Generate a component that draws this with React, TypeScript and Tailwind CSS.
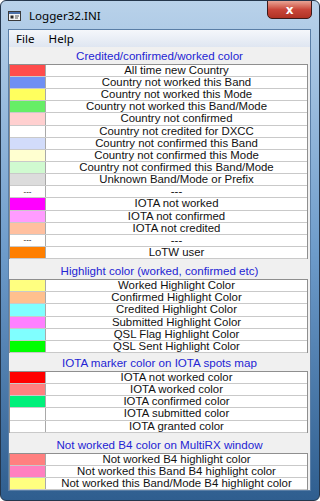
import React from "react";

type Row = { sw: string; label: string; dash?: boolean };

const sec1: Row[] = [
  { sw: "bg-[#ff4c4c]", label: "All time new Country" },
  { sw: "bg-[#6f8ff3]", label: "Country not worked this Band" },
  { sw: "bg-[#ffff5e]", label: "Country not worked this Mode" },
  { sw: "bg-[#66ee66]", label: "Country not worked this Band/Mode" },
  { sw: "bg-[#ffd0d0]", label: "Country not confirmed" },
  { sw: "bg-white", label: "Country not credited for DXCC" },
  { sw: "bg-[#d2dcfa]", label: "Country not confirmed this Band" },
  { sw: "bg-[#ffffd0]", label: "Country not confirmed this Mode" },
  { sw: "bg-[#d0fad0]", label: "Country not confirmed this Band/Mode" },
  { sw: "bg-[#dcdcdc]", label: "Unknown Band/Mode or Prefix" },
  { sw: "bg-white", label: "---", dash: true },
  { sw: "bg-[#ff00ff]", label: "IOTA not worked" },
  { sw: "bg-[#ff9cff]", label: "IOTA not confirmed" },
  { sw: "bg-[#ffc0a0]", label: "IOTA not credited" },
  { sw: "bg-white", label: "---", dash: true },
  { sw: "bg-[#ff7f00]", label: "LoTW user" },
];

const sec2: Row[] = [
  { sw: "bg-[#ffff80]", label: "Worked Highlight Color" },
  { sw: "bg-[#ffc08e]", label: "Confirmed Highlight Color" },
  { sw: "bg-[#80ffff]", label: "Credited Highlight Color" },
  { sw: "bg-[#ff80ff]", label: "Submitted Highlight Color" },
  { sw: "bg-[#80ffff]", label: "QSL Flag Highlight Color" },
  { sw: "bg-[#00ff00]", label: "QSL Sent Highlight Color" },
];

const sec3: Row[] = [
  { sw: "bg-[#ff0000]", label: "IOTA not worked color" },
  { sw: "bg-[#ff8080]", label: "IOTA worked color" },
  { sw: "bg-[#00f07a]", label: "IOTA confirmed color" },
  { sw: "bg-white", label: "IOTA submitted color" },
  { sw: "bg-white", label: "IOTA granted color" },
];

const sec4: Row[] = [
  { sw: "bg-[#ff8080]", label: "Not worked B4 highlight color" },
  { sw: "bg-[#ff80c0]", label: "Not worked this Band B4 highlight color" },
  { sw: "bg-[#ffff80]", label: "Not worked this Band/Mode B4 highlight color" },
];

function Table({ rows }: { rows: Row[] }) {
  return (
    <div className="mr-[2px] border border-[#8f8f8f] border-b-0">
      {rows.map((r, i) => (
        <div key={i} className="flex h-[12.15px] border-b border-[#c9c9c9] bg-white">
          <div className={`w-[36px] border-r border-[#a9a9a9] ${r.sw} flex items-center justify-center text-[8px] leading-[8px] text-black`}>
            {r.dash ? "---" : ""}
          </div>
          <div className="flex-1 text-center text-[11.4px] leading-[11.5px] text-[#111]">{r.label}</div>
        </div>
      ))}
    </div>
  );
}

function Header({ text, h }: { text: string; h: string }) {
  return (
    <div className={`flex items-end justify-center ${h} pb-[2px] text-[11.6px] leading-[13px] text-[#2424d4]`}>
      {text}
    </div>
  );
}

export default function App() {
  return (
    <div className="w-[320px] h-[501px] bg-white" style={{ fontFamily: '"Liberation Sans", Arial, sans-serif' }}>
      <div className="relative w-[320px] h-[501px] rounded-[6px] border border-[#24364c] bg-gradient-to-b from-[#b9d2ea] via-[#6e9ccb] to-[#2f5e8f] flex flex-col overflow-hidden">
        {/* title bar */}
        <div className="h-[28px] flex items-start pl-[7px] pt-[8px] relative">
          <svg width="14" height="12" viewBox="0 0 14 12" className="mt-[1px]">
            <rect x="0.5" y="1.5" width="12" height="9" fill="#f4f4f4" stroke="#3a3a3a" />
            <rect x="1" y="2" width="11" height="2" fill="#4a6fa8" />
            <rect x="2.5" y="5.5" width="3" height="3" fill="#2a2a2a" />
            <path d="M7 6h4M7 8h3" stroke="#555" />
          </svg>
          <span className="ml-[7px] text-[11.6px] leading-[14px] text-black" style={{ fontFamily: '"Noto Sans", "Open Sans", sans-serif' }}>
            Logger32.INI
          </span>
          <div className="absolute left-[266px] top-[-1px] w-[45px] h-[19px] rounded-b-[5px] border border-[#3b1a1a] bg-gradient-to-b from-[#e8a395] via-[#c9463a] to-[#b03224] flex items-center justify-center">
            <span className="text-white font-bold text-[12px] leading-[12px]" style={{ fontFamily: '"DejaVu Sans", sans-serif' }}>x</span>
          </div>
        </div>
        {/* client */}
        <div className="ml-[7px] mr-[8px] flex-1 flex flex-col border border-[#5a7ea6] bg-[#f0f0f0]">
          <div className="h-[17px] bg-gradient-to-b from-[#f5f7fb] to-[#dfe6f1] flex items-center text-[11.6px] text-black" style={{ fontFamily: '"Noto Sans", "Open Sans", sans-serif' }}>
            <span className="ml-[7px]">File</span>
            <span className="ml-[14px]">Help</span>
          </div>
          <Header text="Credited/confirmed/worked color" h="h-[17px]" />
          <Table rows={sec1} />
          <Header text="Highlight color (worked, confirmed etc)" h="h-[20px]" />
          <Table rows={sec2} />
          <Header text="IOTA marker color on IOTA spots map" h="h-[18px]" />
          <Table rows={sec3} />
          <Header text="Not worked B4 color on MultiRX window" h="h-[20px]" />
          <Table rows={sec4} />
        </div>
        <div className="h-[9px]" />
      </div>
    </div>
  );
}
